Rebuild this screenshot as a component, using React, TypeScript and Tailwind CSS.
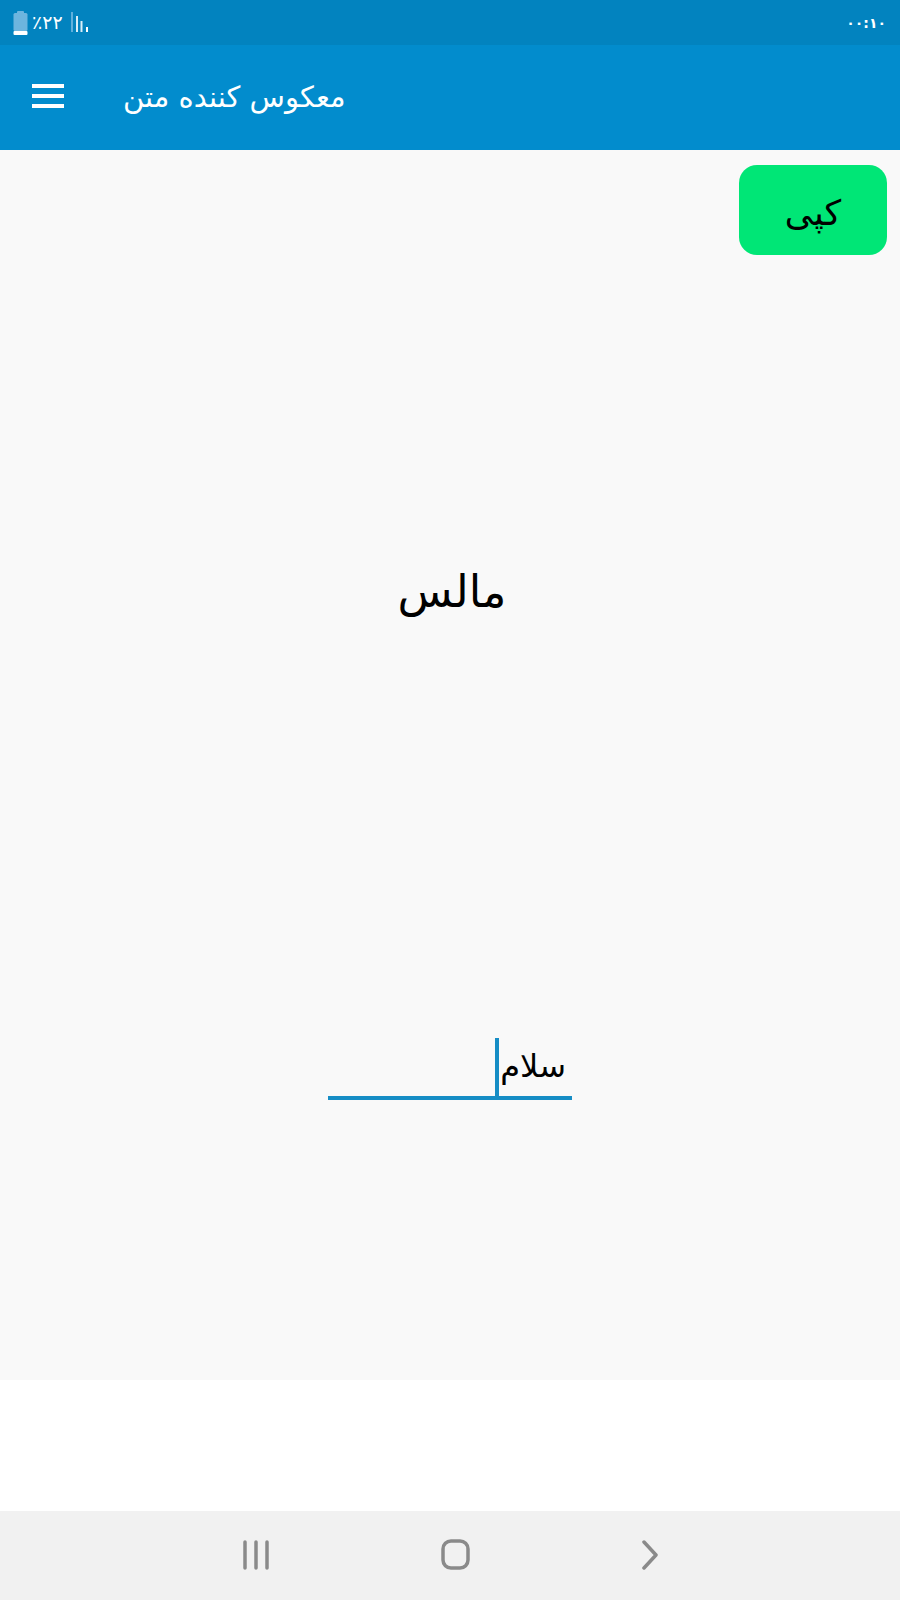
const font = "font-['DejaVu_Sans',sans-serif]";

function Battery() {
  return (
    <svg width="15" height="24" viewBox="0 0 15 24">
      <rect x="4" y="0" width="7" height="3" rx="1" fill="#6db5de" />
      <rect x="0.5" y="2" width="14" height="18" rx="1.5" fill="#6db5de" />
      <rect x="0.5" y="20" width="14" height="4" rx="1" fill="#ffffff" />
    </svg>
  );
}

function Signal() {
  return (
    <svg width="18" height="21" viewBox="0 0 18 21">
      <rect x="0" y="0" width="2" height="20" fill="#5fb0dc" />
      <rect x="5" y="4" width="2" height="16" fill="#d8eef8" />
      <rect x="9.5" y="9" width="2" height="11" fill="#d8eef8" />
      <rect x="15" y="15" width="2" height="5" fill="#ffffff" />
    </svg>
  );
}

function MenuIcon() {
  return (
    <svg width="32" height="24" viewBox="0 0 32 24" fill="#ffffff">
      <rect x="0" y="0" width="32" height="4" />
      <rect x="0" y="10" width="32" height="4" />
      <rect x="0" y="20" width="32" height="4" />
    </svg>
  );
}

function StatusBar() {
  return (
    <div className="h-[45px] shrink-0 bg-[#0283bf] flex items-center justify-between pl-[13px] pr-[14px]">
      <div className="flex items-center gap-[4px]">
        <Battery />
        <span className={`${font} text-[19px] leading-none text-white`}>٪۲۲</span>
        <div className="ml-[4px]">
          <Signal />
        </div>
      </div>
      <span className={`${font} text-[14px] leading-none font-bold text-white`}>۰۰:۱۰</span>
    </div>
  );
}

function AppBar() {
  return (
    <div className="h-[105px] shrink-0 bg-[#028ccd] flex items-center pl-[32px]">
      <div className="mb-[3px]">
        <MenuIcon />
      </div>
      <span dir="rtl" className={`${font} ml-[59px] text-[29px] leading-none text-white`}>معکوس کننده متن</span>
    </div>
  );
}

function NavBar() {
  return (
    <div className="h-[89px] shrink-0 bg-[#f1f1f1] flex items-center justify-center gap-[172px] pb-[2px]">
      <svg width="26" height="30" viewBox="0 0 26 30" fill="none" stroke="#8a8a8a" strokeWidth="3.5" strokeLinecap="round">
        <path d="M2 2v26M13 2v26M24 2v26" />
      </svg>
      <svg width="29" height="32" viewBox="0 0 29 32" fill="none" stroke="#8a8a8a" strokeWidth="3.5">
        <rect x="2" y="2" width="25" height="27" rx="8" />
      </svg>
      <svg width="16" height="30" viewBox="0 0 16 30" fill="none" stroke="#8a8a8a" strokeWidth="3.5" strokeLinecap="round" strokeLinejoin="round">
        <path d="M2 2l12 13L2 28" />
      </svg>
    </div>
  );
}

export default function App() {
  return (
    <div className="w-[900px] h-[1600px] flex flex-col bg-white overflow-hidden">
      <StatusBar />
      <AppBar />
      <div className="h-[1230px] shrink-0 bg-[#f9f9f9] flex flex-col items-center">
        <div className="self-end mt-[15px] mr-[13px] w-[148px] h-[90px] rounded-[18px] bg-[#00e676] flex items-center justify-center pt-[6px]">
          <span dir="rtl" className={`${font} text-[35px] leading-none text-black`}>کپی</span>
        </div>
        <div dir="rtl" className={`${font} mt-[302px] ml-[4px] text-[45px] leading-[70px] text-black`}>مالس</div>
        <div className="relative mt-[413px] w-[244px] h-[60px] border-b-[4px] border-[#168dc5] flex justify-end pr-[6px]">
          <span dir="rtl" className={`${font} text-[32px] leading-[52px] text-black`}>سلام</span>
          <div className="absolute left-[167px] top-[-2px] bottom-[-4px] w-[4px] bg-[#168dc5]" />
        </div>
      </div>
      <div className="flex-1" />
      <NavBar />
    </div>
  );
}
